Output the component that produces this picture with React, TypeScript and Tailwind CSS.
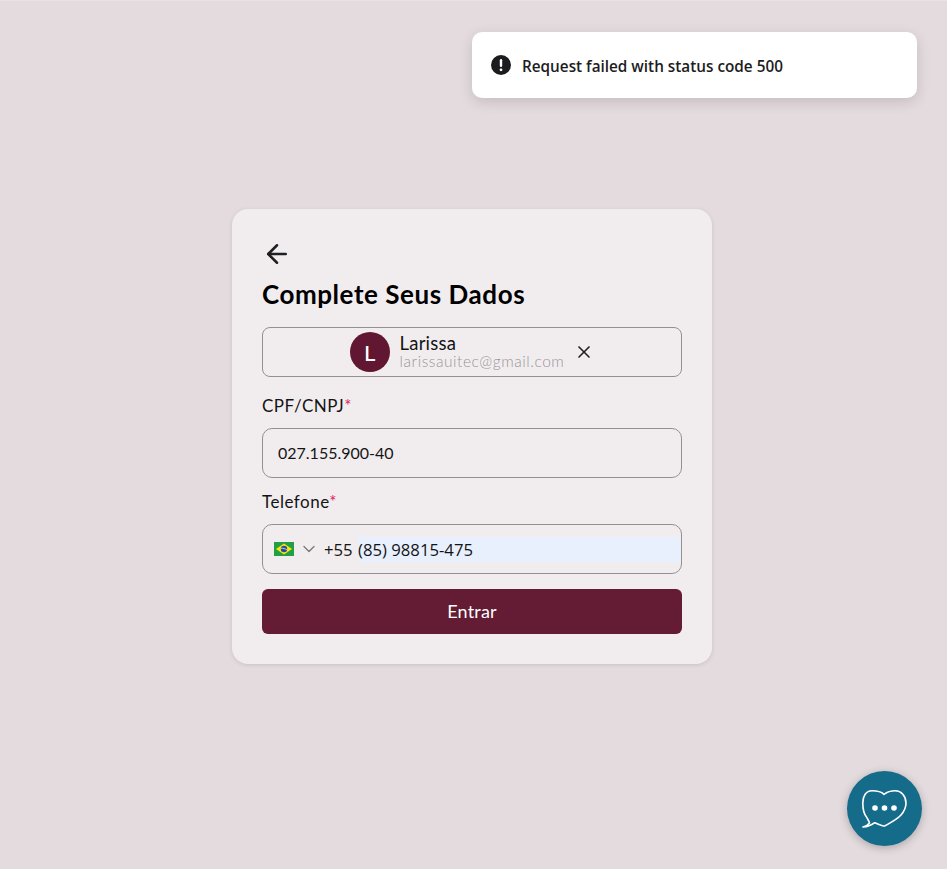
import { ArrowLeft, ChevronDown, X } from "lucide-react";

const quick = "font-['Lato','Noto_Sans',sans-serif]";
const segoe = "font-['Open_Sans','Noto_Sans',sans-serif]";

function BrazilFlag() {
  return (
    <svg width="20" height="14" viewBox="0 0 20 14" className="shrink-0">
      <rect width="20" height="14" fill="#229e45" />
      <path d="M10 1.6 18 7l-8 5.4L2 7z" fill="#f8e509" />
      <circle cx="10" cy="7" r="3.2" fill="#2b49a3" />
      <path d="M6.9 6.3c2.2-.3 4.4.3 6.1 1.6" stroke="#fff" strokeWidth="0.7" fill="none" />
    </svg>
  );
}

function ChatIcon() {
  return (
    <svg width="46" height="38" viewBox="0 0 46 38" fill="none">
      <path
        d="M22 4.3C19 1.500 14 .8 10 .8 4 .8.8 6 .8 13c0 6 1.200 11 3.700 14 1 2 2.500 4 3 6-1.500 2-4.500 3.500-6.500 4 4 0 8-1.500 11.700-4.300 2.300.8 7.300 3.300 10 3.300 4.300-2.500 12.300-6.500 16.300-11 3.500-4 5-7.500 5-12 0-7-5-12.200-10.500-12.200-4.500 0-8.500 1.200-11.500 3.500z"
        stroke="#fff"
        strokeWidth="1.600"
        strokeLinejoin="round"
      />
      <circle cx="13" cy="18" r="2.800" fill="#fff" />
      <circle cx="22.500" cy="18" r="2.800" fill="#fff" />
      <circle cx="32" cy="18" r="2.800" fill="#fff" />
    </svg>
  );
}

export default function App() {
  return (
    <div className="relative flex h-[869px] w-[947px] items-start justify-center border-t border-[#e8e4e6] bg-[#e4dbdf] pt-[208px] pr-[3px]">
      {/* toast */}
      <div className="absolute top-[31px] left-[472px] flex h-[66px] w-[445px] items-center gap-[10px] rounded-[10px] bg-white px-[18px] shadow-[0_4px_14px_rgba(0,0,0,0.14)]">
        <svg width="22" height="22" viewBox="0 0 22 22" className="shrink-0">
          <circle cx="11" cy="11" r="10" fill="#1c1c1e" />
          <rect x="9.800" y="5" width="2.400" height="8" rx="1.200" fill="#fff" />
          <circle cx="11" cy="15.800" r="1.400" fill="#fff" />
        </svg>
        <span className={`${segoe} mt-[2px] text-[15.300px] font-semibold text-[#1c1c1e]`}>
          Request failed with status code 500
        </span>
      </div>

      {/* card */}
      <div
        className={`${quick} flex h-[455px] w-[480px] flex-col rounded-[16px] bg-[#f1edef] px-[30px] pt-[30px] shadow-[0_1px_4px_rgba(0,0,0,0.12)]`}
      >
        <ArrowLeft size={30} strokeWidth={2} className="text-[#1f1f22]" />
        <h1 className="mt-[9px] text-[26px] leading-[32px] font-bold tracking-[0.55px] text-black">
          Complete Seus Dados
        </h1>

        <div className="mt-[17px] flex h-[50px] items-center justify-center rounded-[8px] border border-[#958f91]">
          <div className="flex size-[40px] items-center justify-center rounded-full bg-[#611632] text-[22px] font-medium text-white">
            L
          </div>
          <div className="ml-[10px] flex flex-col">
            <span className="text-[18.500px] leading-[18px] tracking-[0.2px] text-[#141414]">Larissa</span>
            <span className="text-[15.500px] leading-[18px] font-light tracking-[0.55px] text-[#9a9497]">
              larissauitec@gmail.com
            </span>
          </div>
          <X size={20} strokeWidth={2} className="mb-[1px] ml-[10px] text-[#1f1f22]" />
        </div>

        <label className="mt-[18px] text-[17px] leading-[22px] tracking-[0.5px] text-[#141414]">
          CPF/CNPJ<span className="text-[#e0245e]">*</span>
        </label>
        <div className="mt-[11px] flex h-[50px] items-center rounded-[10px] border border-[#958f91] px-[15px] text-[16px] text-[#141414]">
          027.155.900-40
        </div>

        <label className="mt-[13px] text-[17px] leading-[22px] tracking-[0.5px] text-[#141414]">
          Telefone<span className="text-[#e0245e]">*</span>
        </label>
        <div className="mt-[11px] flex h-[50px] items-center overflow-hidden rounded-[10px] border border-[#958f91] pl-[11px] text-[#141414]">
          <BrazilFlag />
          <ChevronDown size={20} strokeWidth={1.500} className="ml-[5px] text-[#77767a]" />
          <div className={`${segoe} ml-[5px] flex h-[25px] flex-1 items-center text-[16.700px]`}>
            <span className="mt-[2px] w-[34px] shrink-0 whitespace-nowrap">+55</span>
            <span className="flex h-full flex-1 items-center bg-[#e8f0fe] pt-[2px] whitespace-nowrap">
              (85) 98815-475
            </span>
          </div>
        </div>

        <button className="mt-[15px] h-[45px] rounded-[6px] bg-[#641b34] text-[18px] font-normal tracking-[0.2px] text-white">
          Entrar
        </button>
      </div>

      {/* chat */}
      <button className="absolute top-[770px] left-[847px] flex size-[75px] items-center justify-center rounded-full bg-[#156c8a] shadow-[0_2px_8px_rgba(0,0,0,0.25)]">
        <ChatIcon />
      </button>
    </div>
  );
}
